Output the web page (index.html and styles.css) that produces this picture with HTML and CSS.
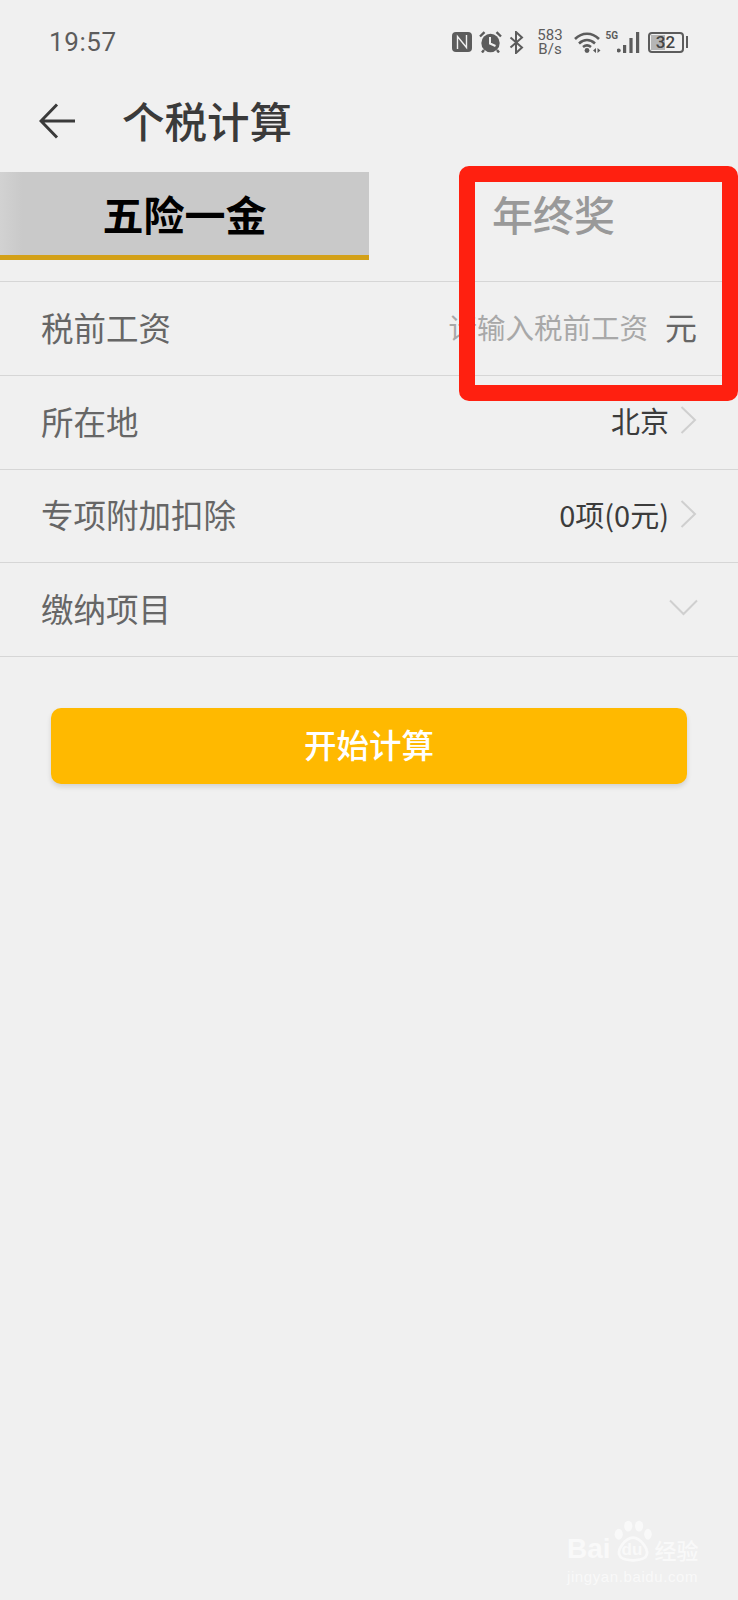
FILE: index.html
```html
<!DOCTYPE html>
<html lang="zh-CN">
<head>
    <meta charset="UTF-8">
    <meta name="viewport" content="width=device-width, initial-scale=1.0">
    <title>个税计算</title>
    <link rel="stylesheet" href="styles.css">
</head>
<body>
    <div class="page">
        <div class="status-bar">
            <span class="clock">19:57</span>
            <div class="status-icons">
                <svg class="icon-nfc" width="20" height="20" viewBox="0 0 20 20">
                    <rect width="20" height="20" rx="4" fill="#5c5c5c"/>
                    <path d="M5.5 17V4.5L14.5 15.5V3" fill="none" stroke="#f0f0f0" stroke-width="1.4"/>
                </svg>
                <svg class="icon-alarm" width="23" height="22" viewBox="0 0 23 22">
                    <circle cx="11.5" cy="12" r="9.2" fill="#5c5c5c"/>
                    <path d="M11 6V12.5L16.5 15" fill="none" stroke="#f0f0f0" stroke-width="2"/>
                    <path d="M1 5.5L5.5 1.2M22 5.5L17.5 1.2M5 19L3 21.5M18 19L20 21.5" fill="none" stroke="#5c5c5c" stroke-width="2.4"/>
                </svg>
                <svg class="icon-bt" width="15" height="23" viewBox="0 0 15 23">
                    <path d="M1.5 6.5L13 16.5L7 22V1L13 6.5L1.5 16.5" fill="none" stroke="#5c5c5c" stroke-width="2"/>
                </svg>
                <div class="speed"><span>583</span><span>B/s</span></div>
                <svg class="icon-wifi" width="27" height="22" viewBox="0 0 27 22">
                    <path d="M1 8C8 1 18 1 25 8M5 12.5C10 8 16 8 21 12.5M9 16C11.5 14 14.5 14 17 16" fill="none" stroke="#5c5c5c" stroke-width="2.6"/>
                    <circle cx="13" cy="19.5" r="2.4" fill="#5c5c5c"/>
                    <path d="M19 19.5L22 17V22ZM26.5 19.5L23.5 17V22Z" fill="#5c5c5c"/>
                </svg>
                <div class="signal">
                    <span class="signal-type">5G</span>
                    <svg width="23" height="21" viewBox="0 0 23 21">
                        <circle cx="1.7" cy="18.5" r="2" fill="#5c5c5c"/>
                        <rect x="6" y="13" width="3.2" height="8" fill="#5c5c5c"/>
                        <rect x="12.4" y="6" width="3.2" height="15" fill="#5c5c5c"/>
                        <rect x="19" y="0" width="3.2" height="21" fill="#5c5c5c"/>
                    </svg>
                </div>
                <div class="battery">
                    <div class="battery-body">
                        <div class="battery-level"></div>
                        <span class="battery-num">32</span>
                    </div>
                    <div class="battery-nub"></div>
                </div>
            </div>
        </div>

        <div class="header">
            <svg class="back" width="37" height="36" viewBox="0 0 37 36">
                <path d="M36 18H2M18 1.5L2 18L18 34.5" fill="none" stroke="#3a3a3a" stroke-width="3"/>
            </svg>
            <h1>个税计算</h1>
        </div>

        <div class="tabs">
            <div class="tab active">五险一金</div>
            <div class="tab">年终奖</div>
        </div>

        <div class="form-list">
            <div class="form-row">
                <span class="label">税前工资</span>
                <div class="value">
                    <span class="placeholder">请输入税前工资</span>
                    <span class="unit">元</span>
                </div>
            </div>
            <div class="form-row">
                <span class="label">所在地</span>
                <div class="value">
                    <span class="picked">北京</span>
                    <svg class="chevron" width="17" height="28" viewBox="0 0 17 28">
                        <path d="M1.5 1L15 14L1.5 27" fill="none" stroke="#cfcfcf" stroke-width="2"/>
                    </svg>
                </div>
            </div>
            <div class="form-row">
                <span class="label">专项附加扣除</span>
                <div class="value">
                    <span class="picked">0项(0元)</span>
                    <svg class="chevron" width="17" height="28" viewBox="0 0 17 28">
                        <path d="M1.5 1L15 14L1.5 27" fill="none" stroke="#cfcfcf" stroke-width="2"/>
                    </svg>
                </div>
            </div>
            <div class="form-row">
                <span class="label">缴纳项目</span>
                <div class="value">
                    <svg class="chevron-down" width="29" height="17" viewBox="0 0 29 17">
                        <path d="M1 1.5L14.5 15L28 1.5" fill="none" stroke="#cfcfcf" stroke-width="2"/>
                    </svg>
                </div>
            </div>
        </div>

        <button type="button" class="start-btn">开始计算</button>

        <!-- annotation frame drawn over the screenshot -->
        <div class="red-frame"></div>

        <div class="watermark">
            <div class="wm-top">
                <span class="wm-bai">Bai</span>
                <div class="wm-paw">
                    <svg width="38" height="42" viewBox="0 0 56 60">
                        <ellipse cx="7" cy="20" rx="6" ry="8" fill="#f9f9f9"/>
                        <ellipse cx="21" cy="8" rx="6" ry="8" fill="#f9f9f9"/>
                        <ellipse cx="37" cy="8" rx="6" ry="8" fill="#f9f9f9"/>
                        <ellipse cx="50" cy="20" rx="5.5" ry="8" fill="#f9f9f9"/>
                        <path d="M28 25C38 25 55 44 46 54C38 60 18 60 10 54C1 44 18 25 28 25Z" fill="none" stroke="#f9f9f9" stroke-width="4"/>
                    </svg>
                    <span class="wm-du">du</span>
                </div>
                <span class="wm-jy">经验</span>
            </div>
            <div class="wm-url">jingyan.baidu.com</div>
        </div>
    </div>
</body>
</html>
```

FILE: styles.css
```css
* {
    box-sizing: border-box;
}
html, body {
    margin: 0;
    padding: 0;
}
body {
    background-color: #f0f0f0;
    font-family: "Noto Sans CJK SC", "Noto Sans", sans-serif;
}
.page {
    position: relative;
    width: 738px;
    height: 1600px;
    overflow: hidden;
    background-color: #f0f0f0;
}

/* status bar */
.status-bar {
    height: 88px;
    padding: 28px 50px 0 49px;
    display: flex;
    justify-content: space-between;
    align-items: flex-start;
}
.clock {
    font-family: Roboto, sans-serif;
    font-size: 26px;
    line-height: 28px;
    letter-spacing: 0.6px;
    color: #5c5c5c;
}
.status-icons {
    display: flex;
    align-items: center;
    height: 28px;
}
.icon-nfc { margin-right: 7px; }
.icon-alarm { margin-right: 7px; }
.icon-bt { margin-right: 13px; }
.speed {
    display: flex;
    flex-direction: column;
    align-items: center;
    width: 27px;
    margin-right: 10px;
    font-family: Roboto, sans-serif;
    font-size: 15px;
    line-height: 14px;
    color: #5c5c5c;
}
.icon-wifi { margin-right: 5px; }
.signal {
    position: relative;
    width: 34px;
    height: 22px;
    margin-right: 8px;
    display: flex;
    justify-content: flex-end;
    align-items: flex-end;
}
.signal-type {
    position: absolute;
    left: 0;
    top: 0;
    font-family: Roboto, sans-serif;
    font-size: 10px;
    line-height: 10px;
    font-weight: 700;
    color: #5c5c5c;
}
.battery {
    display: flex;
    align-items: center;
}
.battery-body {
    position: relative;
    width: 36px;
    height: 21px;
    border: 2px solid #5c5c5c;
    border-radius: 4px;
    display: flex;
    align-items: center;
    justify-content: center;
}
.battery-level {
    position: absolute;
    left: 1px;
    top: 1px;
    bottom: 1px;
    width: 14px;
    background-color: #b5b5b5;
}
.battery-num {
    position: relative;
    font-family: Roboto, sans-serif;
    font-size: 17px;
    line-height: 17px;
    font-weight: 500;
    color: #444;
}
.battery-nub {
    width: 2.5px;
    height: 12px;
    margin-left: 2px;
    background-color: #5c5c5c;
}

/* header */
.header {
    height: 84px;
    padding-left: 39px;
    padding-bottom: 19px;
    display: flex;
    align-items: center;
}
.header h1 {
    margin: 0 0 2px 46px;
    font-size: 42.5px;
    line-height: 56px;
    font-weight: 500;
    color: #3a3a3a;
}

/* tabs */
.tabs {
    height: 110px;
    display: flex;
    align-items: flex-start;
    border-bottom: 1px solid #d6d6d6;
}
.tab {
    width: 369px;
    height: 88px;
    padding-bottom: 6px;
    font-size: 41px;
    font-weight: 500;
    color: #999;
    display: flex;
    align-items: center;
    justify-content: center;
}
.tab.active {
    font-weight: 700;
    color: #000;
    background: linear-gradient(to right, #d2d2d2, #c9c9c9 6%, #c9c9c9);
    border-bottom: 5px solid #d3a017;
    padding-bottom: 1px;
}

/* form rows */
.form-row {
    height: 93.75px;
    padding: 0 41px 4px;
    display: flex;
    justify-content: space-between;
    align-items: center;
    border-bottom: 1px solid #d6d6d6;
}
.label {
    font-size: 32.5px;
    color: #666;
}
.value {
    display: flex;
    align-items: center;
}
.placeholder {
    font-size: 28.5px;
    margin-left: -2px;
    color: #a8a8a8;
}
.unit {
    margin-left: 17px;
    font-size: 32px;
    color: #666;
}
.picked {
    font-size: 29px;
    color: #3c3c3c;
}
.chevron {
    margin-left: 11px;
}
.chevron-down {
    margin-right: -1px;
}

/* button */
.start-btn {
    display: block;
    width: 636px;
    height: 76px;
    margin: 51px 0 0 51px;
    padding: 0 0 6px;
    border: none;
    border-radius: 10px;
    background-color: #ffb900;
    box-shadow: 0 3px 5px rgba(0, 0, 0, 0.12);
    color: #fff;
    font-family: inherit;
    font-size: 32.5px;
    font-weight: 500;
}

/* overlays */
.red-frame {
    position: absolute;
    left: 459px;
    top: 166px;
    width: 279px;
    height: 235px;
    border: 16px solid #ff2010;
    border-radius: 10px;
}
.watermark {
    position: absolute;
    left: 567px;
    top: 1520px;
    width: 140px;
    color: #f9f9f9;
}
.wm-top {
    display: flex;
    align-items: flex-end;
    height: 42px;
}
.wm-bai {
    font-family: "Liberation Sans", sans-serif;
    font-size: 28px;
    line-height: 26px;
    font-weight: 700;
}
.wm-paw {
    position: relative;
    width: 41px;
    height: 42px;
    margin-left: 3px;
}
.wm-paw svg {
    position: absolute;
    left: 0;
    bottom: 0;
}
.wm-du {
    position: absolute;
    left: 8px;
    bottom: 2px;
    font-family: "Liberation Sans", sans-serif;
    font-size: 17px;
    line-height: 20px;
    font-weight: 700;
}
.wm-jy {
    font-size: 22px;
    line-height: 26px;
    font-weight: 500;
    white-space: nowrap;
}
.wm-url {
    margin-top: 5px;
    font-family: "Liberation Sans", sans-serif;
    font-size: 15px;
    line-height: 20px;
    letter-spacing: 0.6px;
    white-space: nowrap;
}
```
